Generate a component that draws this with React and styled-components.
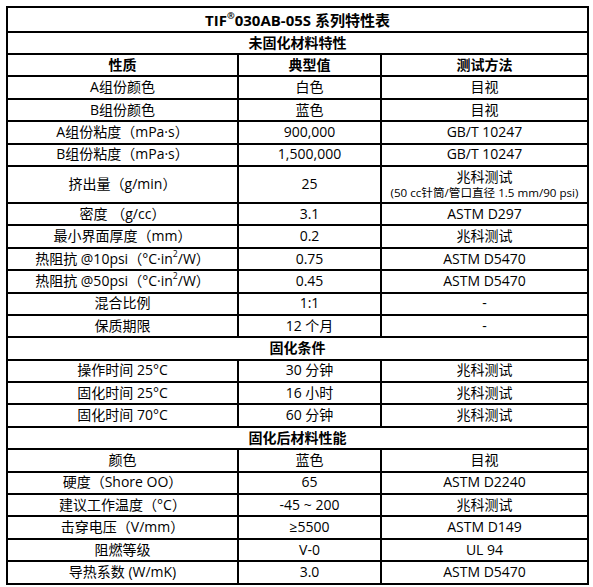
import styled, { createGlobalStyle } from "styled-components";

const GlobalStyle = createGlobalStyle`
  html, body {
    margin: 0;
    padding: 0;
    background: #ffffff;
  }
  body {
    font-family: "Open Sans", "Noto Sans CJK SC", sans-serif;
    color: #000000;
  }
`;

const Page = styled.div`
  padding: 6px 0 0 6px;
`;

const Sheet = styled.div`
  display: grid;
  grid-template-columns: 231px 143px 207px;
  width: 583px;
  box-sizing: border-box;
  border-top: 2px solid #000;
  border-left: 2px solid #000;
`;

const Cell = styled.div`
  grid-column: ${(p) => (p.$span ? "1 / -1" : "auto")};
  height: ${(p) => p.$h || 22.4}px;
  box-sizing: border-box;
  border-right: 2px solid #000;
  border-bottom: 2px solid #000;
  display: flex;
  flex-direction: column;
  align-items: center;
  justify-content: center;
  font-size: ${(p) => p.$size || 14}px;
  font-weight: ${(p) => (p.$bold ? 700 : 400)};
  line-height: 1.2;
  white-space: nowrap;

  sup {
    font-size: 0.62em;
    line-height: 0;
    position: relative;
    top: -0.1em;
  }
`;

const Line = styled.span`
  display: block;
`;

const Note = styled.span`
  display: block;
  font-size: 11.6px;
  line-height: 1.2;
`;

const sup2 = <sup>2</sup>;

const sections = [
  {
    title: "未固化材料特性",
    head: true,
    rows: [
      ["A组份颜色", "白色", "目视"],
      ["B组份颜色", "蓝色", "目视"],
      ["A组份粘度（mPa·s）", "900,000", "GB/T 10247"],
      ["B组份粘度（mPa·s）", "1,500,000", "GB/T 10247"],
      ["挤出量（g/min）", "25", "兆科测试", 37, "(50 cc针筒/管口直径 1.5 mm/90 psi)"],
      ["密度 （g/cc）", "3.1", "ASTM D297"],
      ["最小界面厚度（mm）", "0.2", "兆科测试"],
      [<>热阻抗 @10psi（°C·in{sup2}/W）</>, "0.75", "ASTM D5470"],
      [<>热阻抗 @50psi（°C·in{sup2}/W）</>, "0.45", "ASTM D5470"],
      ["混合比例", "1:1", "-"],
      ["保质期限", "12 个月", "-"],
    ],
  },
  {
    title: "固化条件",
    rows: [
      ["操作时间 25°C", "30 分钟", "兆科测试"],
      ["固化时间 25°C", "16 小时", "兆科测试"],
      ["固化时间 70°C", "60 分钟", "兆科测试"],
    ],
  },
  {
    title: "固化后材料性能",
    rows: [
      ["颜色", "蓝色", "目视"],
      ["硬度（Shore OO）", "65", "ASTM D2240"],
      ["建议工作温度（°C）", "-45 ~ 200", "兆科测试"],
      ["击穿电压（V/mm）", "≥5500", "ASTM D149"],
      ["阻燃等级", "V-0", "UL 94"],
      ["导热系数 (W/mK)", "3.0", "ASTM D5470"],
    ],
  },
];

export default function App() {
  return (
    <Page>
      <GlobalStyle />
      <Sheet>
        <Cell $span $bold $size={15} $h={25}>
          <Line>
            TIF<sup>®</sup>030AB-05S 系列特性表
          </Line>
        </Cell>
        {sections.map((sec, si) => (
          <Section key={si} sec={sec} first={si === 0} />
        ))}
      </Sheet>
    </Page>
  );
}

function Section({ sec, first }) {
  return (
    <>
      <Cell $span $bold $h={first ? 22 : 22.4}>
        <Line>{sec.title}</Line>
      </Cell>
      {sec.head && (
        <>
          <Cell $bold>性质</Cell>
          <Cell $bold>典型值</Cell>
          <Cell $bold>测试方法</Cell>
        </>
      )}
      {sec.rows.map(([a, b, c, h, note], i) => (
        <Row key={i} a={a} b={b} c={c} h={h} note={note} />
      ))}
    </>
  );
}

function Row({ a, b, c, h, note }) {
  return (
    <>
      <Cell $h={h}>
        <Line>{a}</Line>
      </Cell>
      <Cell $h={h}>
        <Line>{b}</Line>
      </Cell>
      <Cell $h={h}>
        <Line>{c}</Line>
        {note && <Note>{note}</Note>}
      </Cell>
    </>
  );
}
